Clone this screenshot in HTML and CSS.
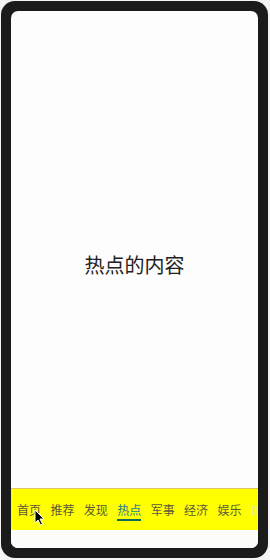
FILE: index.html
```html
<!DOCTYPE html>
<html lang="zh">
<head>
  <meta charset="UTF-8" />
  <title>热点</title>
  <link rel="stylesheet" href="styles.css">
</head>
<body>

  <div class="phone">
    <div class="screen">
      <div class="content">热点的内容</div>

      <div class="tabs">
        <span class="tab">首页</span>
        <span class="tab">推荐</span>
        <span class="tab">发现</span>
        <span class="tab active">热点</span>
        <span class="tab">军事</span>
        <span class="tab">经济</span>
        <span class="tab">娱乐</span>
        <span class="tab faded">体育</span>
      </div>

      <div class="bottom-space"></div>
    </div>
  </div>

  <!-- mouse pointer from the capture -->
  <svg class="cursor" width="11" height="17" viewBox="0 0 11 17">
    <path d="M1 1 L1 14 L4 11 L6.5 16 L8.5 15 L6 10 L10 10 Z" fill="#000" stroke="#fff" stroke-width="1"/>
  </svg>

</body>
</html>
```

FILE: styles.css
```css
body {
  margin: 0;
  background-color: #f4f4f4;
  font-family: "Noto Sans CJK SC", "Noto Sans", sans-serif;
}

.phone {
  margin: 1px 0 0 1px;
  width: 267px;
  height: 557px;
  box-sizing: border-box;
  padding: 10px;
  background-color: #1b1b1b;
  border-radius: 14px;
}

.screen {
  height: 100%;
  display: flex;
  flex-direction: column;
  background-color: #fdfdfd;
  border-radius: 7px;
  overflow: hidden;
}

.content {
  flex: 1;
  display: flex;
  align-items: center;
  justify-content: center;
  padding-top: 30px;
  font-size: 20px;
  color: #222;
}

.tabs {
  height: 42px;
  display: flex;
  align-items: center;
  gap: 9.4px;
  padding-left: 6px;
  background-color: #ffff00;
  border-top: 1px solid #e2c56a;
  box-sizing: border-box;
  overflow: hidden;
  white-space: nowrap;
}

.tab {
  flex: none;
  font-size: 12px;
  line-height: 18px;
  color: #5a5a3a;
  border-bottom: 2px solid transparent;
  padding-top: 2px;
}

.tab.active {
  color: #1f7f8c;
  border-bottom-color: #0d6b5e;
}

.tab.faded {
  color: #e8e8a0;
}

.bottom-space {
  height: 18px;
  background-color: #fcfcfa;
}

.cursor {
  position: absolute;
  left: 34px;
  top: 509px;
}
```
